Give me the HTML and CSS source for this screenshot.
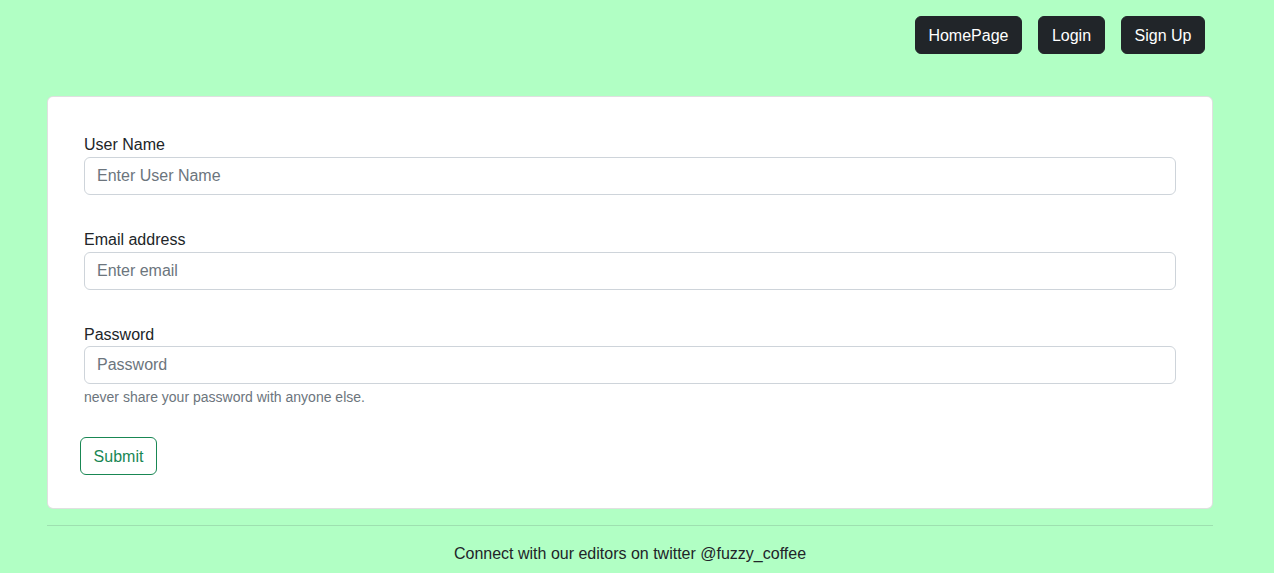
FILE: index.html
```html
<!DOCTYPE html>
<html lang="en">
<head>
<meta charset="utf-8">
<title>Sign Up</title>
<link rel="stylesheet" href="styles.css">
</head>
<body>
<div class="page">
  <nav class="nav">
    <a class="btn btn-dark" href="#">HomePage</a>
    <a class="btn btn-dark" href="#">Login</a>
    <a class="btn btn-dark" href="#">Sign Up</a>
  </nav>
  <main class="card">
    <form class="form">
      <div class="field field-first">
        <label class="label" for="u">User Name</label>
        <input class="input" id="u" type="text" placeholder="Enter User Name">
      </div>
      <div class="field">
        <label class="label" for="e">Email address</label>
        <input class="input" id="e" type="email" placeholder="Enter email">
      </div>
      <div class="field field-last">
        <label class="label label-tight" for="p">Password</label>
        <input class="input" id="p" type="password" placeholder="Password">
        <div class="help">never share your password with anyone else.</div>
      </div>
      <button class="btn btn-outline" type="button">Submit</button>
    </form>
  </main>
  <footer class="footer">
    <p>Connect with our editors on twitter @fuzzy_coffee</p>
  </footer>
</div>
</body>
</html>
```
FILE: styles.css
```css
* { box-sizing: border-box; }
html, body { margin: 0; padding: 0; }
body {
  background: #b1ffc4;
  font-family: "Liberation Sans", Arial, sans-serif;
  font-size: 16px;
  line-height: 24px;
  color: #212529;
}
.page {
  width: 1166px;
  margin-left: 47px;
}
.nav {
  display: flex;
  justify-content: flex-end;
  gap: 16.5px;
  padding: 16px 8px 0 0;
  height: 96px;
}
.btn {
  display: inline-block;
  height: 38px;
  padding: 7px 12.5px 5px;
  border-radius: 6px;
  font-family: inherit;
  font-size: 16px;
  line-height: 24px;
  text-decoration: none;
  border: 1px solid transparent;
  cursor: pointer;
}
.btn-dark {
  background: #212529;
  border-color: #212529;
  color: #fff;
}
.btn-outline {
  background: transparent;
  border-color: #198754;
  color: #198754;
  padding: 7px 12px 5px;
  width: 77px;
}
.card {
  background: #fff;
  border: 1px solid rgba(0,0,0,0.12);
  border-radius: 6px;
  padding: 36px 36px 33px 32px;
}
.form {
  display: flex;
  flex-direction: column;
  align-items: flex-start;
}
.field {
  width: 100%;
  padding-left: 4px;
  margin-bottom: 32px;
}
.field-first { margin-bottom: 33px; }
.field-last { margin-bottom: 29px; }
.label {
  display: block;
  height: 24px;
  line-height: 24px;
}
.label-tight { line-height: 25px; }
.input {
  display: block;
  width: 100%;
  height: 38px;
  padding: 6px 12px;
  border: 1px solid #ced4da;
  border-radius: 6px;
  font-family: inherit;
  font-size: 16px;
  line-height: 24px;
  color: #212529;
  background: #fff;
}
.input::placeholder { color: #6c757d; }
.help {
  margin-top: 3px;
  font-size: 14px;
  line-height: 21px;
  color: #6c757d;
}
.footer {
  margin-top: 16px;
  border-top: 1px solid #9ee0b0;
  text-align: center;
}
.footer p {
  margin: 0;
  padding-top: 16px;
}
```
